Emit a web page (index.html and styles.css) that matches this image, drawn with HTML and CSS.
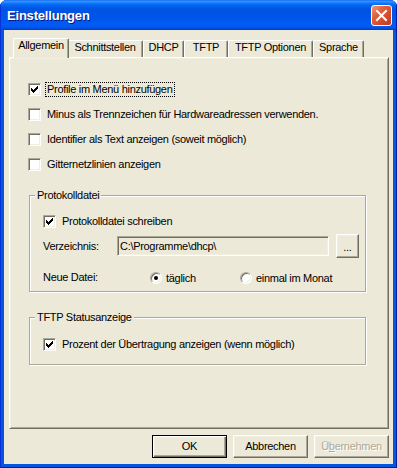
FILE: index.html
```html
<!DOCTYPE html>
<html lang="de">
<head>
    <meta charset="UTF-8">
    <meta name="viewport" content="width=device-width, initial-scale=1.0">
    <title>Einstellungen</title>
    <link rel="stylesheet" href="styles.css">
</head>
<body>
    <div class="window">
        <div class="titlebar">
            <span class="title">Einstellungen</span>
            <span class="close-btn">
                <svg width="19" height="19" viewBox="0 0 19 19"><path d="M5 5l9 9M14 5l-9 9" stroke="#fff" stroke-width="2" stroke-linecap="square"/></svg>
            </span>
        </div>

        <div class="client">
            <div class="tabs">
                <div class="tab tab-active tab-allgemein">Allgemein</div>
                <div class="tab tab-schnitt">Schnittstellen</div>
                <div class="tab tab-dhcp">DHCP</div>
                <div class="tab tab-tftp">TFTP</div>
                <div class="tab tab-optionen">TFTP Optionen</div>
                <div class="tab tab-sprache">Sprache</div>
            </div>

            <div class="panel">
                <div class="check-row">
                    <span class="checkbox"><svg width="11" height="11" viewBox="1 1 11 11"><path d="M3 5h1v3H3zM4 6h1v3H4zM5 7h1v3H5zM6 6h1v3H6zM7 5h1v3H7zM8 4h1v3H8zM9 3h1v3H9z" fill="#000"/></svg></span>
                    <span class="label label-focus">Profile im Menü hinzufügen</span>
                </div>
                <div class="check-row">
                    <span class="checkbox"></span>
                    <span class="label">Minus als Trennzeichen für Hardwareadressen verwenden.</span>
                </div>
                <div class="check-row">
                    <span class="checkbox"></span>
                    <span class="label">Identifier als Text anzeigen (soweit möglich)</span>
                </div>
                <div class="check-row">
                    <span class="checkbox"></span>
                    <span class="label">Gitternetzlinien anzeigen</span>
                </div>

                <div class="group group-log">
                    <span class="group-label">Protokolldatei</span>
                    <div class="check-row">
                        <span class="checkbox"><svg width="11" height="11" viewBox="1 1 11 11"><path d="M3 5h1v3H3zM4 6h1v3H4zM5 7h1v3H5zM6 6h1v3H6zM7 5h1v3H7zM8 4h1v3H8zM9 3h1v3H9z" fill="#000"/></svg></span>
                        <span class="label">Protokolldatei schreiben</span>
                    </div>
                    <div class="field-row">
                        <span class="field-label">Verzeichnis:</span>
                        <span class="edit">C:\Programme\dhcp\</span>
                        <span class="button button-browse">...</span>
                    </div>
                    <div class="radio-row">
                        <span class="field-label field-label-wide">Neue Datei:</span>
                        <span class="radio-item"><span class="radio radio-checked"></span>täglich</span>
                        <span class="radio-item"><span class="radio"></span>einmal im Monat</span>
                    </div>
                </div>

                <div class="group group-tftp">
                    <span class="group-label">TFTP Statusanzeige</span>
                    <div class="check-row">
                        <span class="checkbox"><svg width="11" height="11" viewBox="1 1 11 11"><path d="M3 5h1v3H3zM4 6h1v3H4zM5 7h1v3H5zM6 6h1v3H6zM7 5h1v3H7zM8 4h1v3H8zM9 3h1v3H9z" fill="#000"/></svg></span>
                        <span class="label">Prozent der Übertragung anzeigen (wenn möglich)</span>
                    </div>
                </div>
            </div>

            <div class="buttons">
                <span class="button button-default">OK</span>
                <span class="button">Abbrechen</span>
                <span class="button button-disabled">Ü<u>b</u>ernehmen</span>
            </div>
        </div>
    </div>
</body>
</html>
```

FILE: styles.css
```css
* {
    box-sizing: border-box;
    margin: 0;
    padding: 0;
}

body {
    background: #fff;
    font-family: "Liberation Sans", Arial, sans-serif;
    font-size: 11px;
    letter-spacing: -0.3px;
    color: #000;
}

/* fenster rahmen (luna) */
.window {
    width: 397px;
    height: 468px;
    display: flex;
    flex-direction: column;
    background: #0855dd;
    border-radius: 7px 7px 0 0;
    overflow: hidden;
    box-shadow: inset 1px 0 0 #0831d9, inset -1px 0 0 #001ea0, inset 0 -1px 0 #001ea0;
}

.titlebar {
    height: 30px;
    flex: none;
    display: flex;
    align-items: center;
    justify-content: space-between;
    padding: 0 5px 0 7px;
    background: linear-gradient(to bottom, #0a5ee8 0, #3d95ff 1px, #2a8cff 2px, #127dff 3px, #0470f9 4px, #0262ee 6px, #0057e5 8px, #0054e3 10px, #0055eb 18px, #005bf5 24px, #0058ee 27px, #0046d6 29px, #003dc0 30px);
    box-shadow: inset 1px 0 0 #0831d9, inset -1px 0 0 #001ea0;
}

.title {
    color: #fff;
    font-weight: bold;
    font-size: 13px;
    letter-spacing: -0.2px;
    text-shadow: 1px 1px 0 #0a1883;
}

.close-btn {
    width: 21px;
    height: 21px;
    margin-top: 1px;
    display: flex;
    align-items: center;
    justify-content: center;
    border: 1px solid #fff;
    border-radius: 3px;
    background: linear-gradient(135deg, #f0957a 0, #e2603c 35%, #d2482a 70%, #c13a1c 100%);
}

.close-btn svg {
    display: block;
}

.client {
    flex: 1;
    margin: 0 4px 4px;
    background: #ece9d8;
}

/* reiter */
.tabs {
    display: flex;
    align-items: flex-end;
    height: 19px;
    margin-top: 8px;
    padding-left: 11px;
}

.tab {
    height: 17px;
    border: 1px solid;
    border-bottom: 0;
    border-color: #fff #716f64 #fff #fff;
    border-radius: 2px 2px 0 0;
    box-shadow: inset -1px 0 0 #aca899;
    background: #ece9d8;
    text-align: center;
    line-height: 13px;
    white-space: nowrap;
}

.tab-active {
    height: 20px;
    margin: 0 -2px -1px;
    position: relative;
    z-index: 1;
}

.tab-allgemein { width: 56px; }
.tab-schnitt { width: 76px; }
.tab-dhcp { width: 41px; }
.tab-tftp { width: 44px; }
.tab-optionen { width: 85px; }
.tab-sprache { width: 51px; }

.panel {
    height: 372px;
    margin: 0 4px 0 5px;
    padding-top: 23px;
    border: 1px solid;
    border-color: #fff #716f64 #716f64 #fff;
    box-shadow: inset 1px 1px 0 #f1efe2, inset -1px -1px 0 #aca899;
}

/* kontrollkaestchen */
.check-row {
    display: flex;
    align-items: center;
    height: 17px;
    gap: 4px;
    margin-left: 18px;
}

.check-row + .check-row {
    margin-top: 8px;
}

.checkbox {
    width: 13px;
    height: 13px;
    flex: none;
    background: #fff;
    border: 1px solid;
    border-color: #aca899 #fff #fff #aca899;
    box-shadow: inset 1px 1px 0 #716f64, inset -1px -1px 0 #f1efe2;
}

.checkbox svg {
    display: block;
}

.label {
    border: 1px solid transparent;
    padding: 0 1px;
    line-height: 13px;
    white-space: nowrap;
}

.label-focus {
    border: 1px dotted #000;
}

/* gruppen */
.group {
    width: 337px;
    margin-left: 19px;
    padding-left: 13px;
    border: 1px solid #aca899;
    box-shadow: inset 1px 1px 0 #fff, 1px 1px 0 #fff;
}

.group .check-row {
    margin-left: 0;
}

.group-log {
    margin-top: 22px;
    padding-bottom: 5px;
}

.group-log .check-row {
    margin-top: 11px;
}

.group-tftp {
    margin-top: 25px;
    padding-bottom: 11px;
}

.group-tftp .check-row {
    margin-top: 12px;
}

.group-label {
    display: block;
    width: fit-content;
    margin: -7px 0 0 -8px;
    padding: 0 2px;
    line-height: 13px;
    background: #ece9d8;
}

.field-row {
    display: flex;
    align-items: center;
    height: 24px;
    margin-top: 4px;
}

.field-label {
    width: 74px;
    flex: none;
    line-height: 13px;
}

.field-label-wide {
    width: 107px;
}

.edit {
    width: 212px;
    height: 20px;
    margin-right: 7px;
    padding: 0 2px;
    line-height: 18px;
    background: #ece9d8;
    border: 1px solid;
    border-color: #aca899 #fff #fff #aca899;
    box-shadow: inset 1px 1px 0 #716f64, inset -1px -1px 0 #f1efe2;
    white-space: nowrap;
}

.radio-row {
    display: flex;
    align-items: center;
    height: 17px;
    margin-top: 11px;
}

.radio-item {
    width: 90px;
    display: flex;
    align-items: center;
    gap: 4px;
    white-space: nowrap;
}

.radio {
    width: 12px;
    height: 12px;
    flex: none;
    display: flex;
    align-items: center;
    justify-content: center;
    border-radius: 50%;
    background: #fff;
    border: 1px solid;
    border-color: #aca899 #fff #fff #aca899;
    box-shadow: inset 1px 1px 0 #716f64, inset -1px -1px 0 #f1efe2;
}

.radio-checked::after {
    content: '';
    width: 4px;
    height: 4px;
    border-radius: 50%;
    background: #000;
}

/* schaltflaechen */
.buttons {
    display: flex;
    justify-content: flex-end;
    gap: 6px;
    margin: 6px 4px 0 0;
}

.button {
    width: 75px;
    height: 23px;
    flex: none;
    display: flex;
    align-items: center;
    justify-content: center;
    line-height: 13px;
    background: #ece9d8;
    border: 1px solid;
    border-color: #fff #716f64 #716f64 #fff;
    box-shadow: inset -1px -1px 0 #aca899, inset 1px 1px 0 #f1efe2;
}

.button-browse {
    width: 23px;
    height: 24px;
    align-items: flex-end;
    padding-bottom: 3px;
}

.button-default {
    border-color: #000;
    box-shadow: inset 1px 1px 0 #fff, inset -1px -1px 0 #716f64, inset -2px -2px 0 #aca899, inset 2px 2px 0 #f1efe2;
}

.button-disabled {
    color: #aca899;
    text-shadow: 1px 1px 0 #fff;
}

.button-disabled u {
    text-decoration-color: #aca899;
}
```
